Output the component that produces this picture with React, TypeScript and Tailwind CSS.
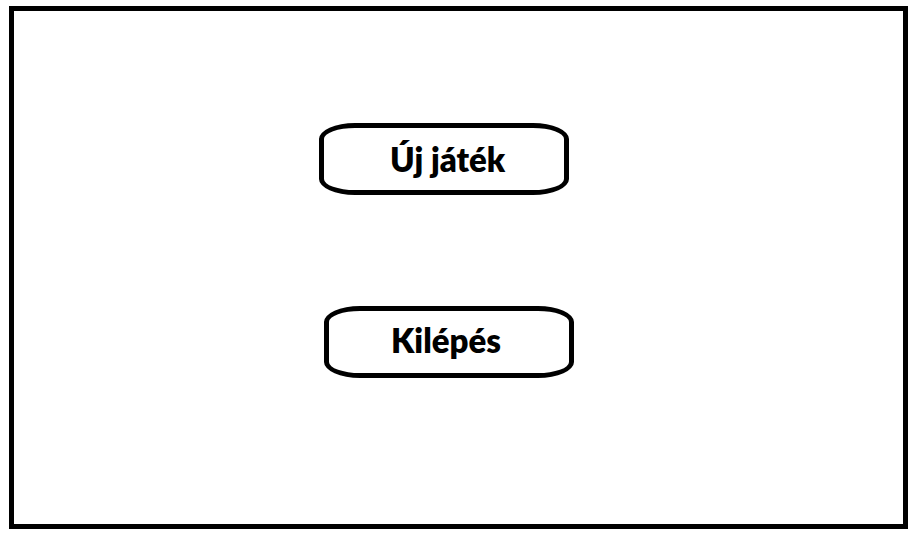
import React from "react";

const menuButton =
  "h-18 w-[250px] rounded-[36px/16px] border-5 border-black bg-white text-left text-[33px] leading-10 font-extrabold";

export default function App() {
  return (
    <div className="h-screen bg-white pt-[6px] pr-2 pb-2 pl-[9px] font-[Lato,Carlito,sans-serif] text-black">
      <main className="flex h-full items-start justify-center border-5 border-black pt-28 pr-6">
        <nav className="flex w-[255px] flex-col gap-[111px]">
          <button type="button" className={`${menuButton} self-start pl-[66px]`}>
            Új játék
          </button>
          <button type="button" className={`${menuButton} self-end pb-1 pl-[62px]`}>
            Kilépés
          </button>
        </nav>
      </main>
    </div>
  );
}
